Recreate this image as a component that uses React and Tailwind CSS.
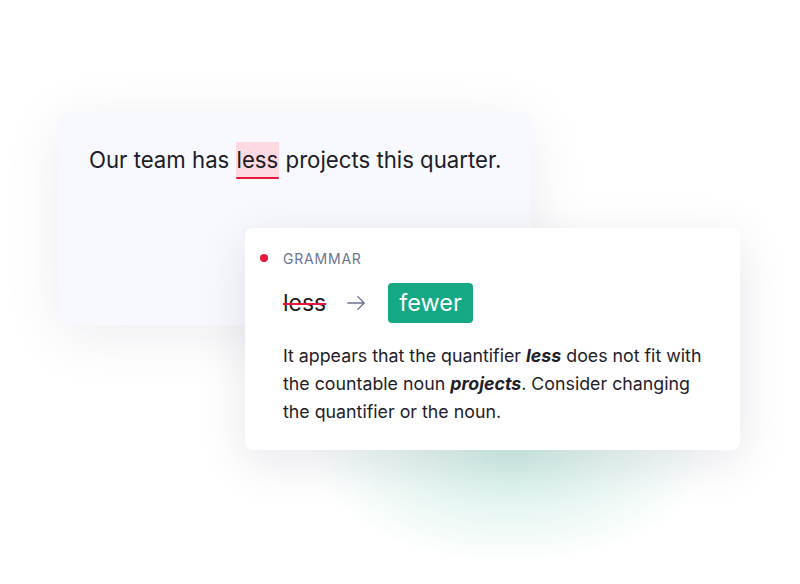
import React from 'react';

const App = () => {
     return (
          <div
               className="relative w-[800px] h-[584px] overflow-hidden bg-white"
               style={{ fontFamily: 'Inter, "Noto Sans", sans-serif' }}
          >
               {/* soft green glow under the suggestion card */}
               <div className="absolute left-[310px] top-[345px] w-[400px] h-[220px] rounded-full bg-[radial-gradient(ellipse_at_center,rgba(20,168,132,0.2),rgba(20,168,132,0)_70%)]" />

               <div className="relative flex flex-col items-start pt-[112px] pl-[59px]">
                    {/* original sentence card */}
                    <div className="w-[472px] h-[213px] rounded-lg bg-[#f8f9fe] shadow-[0_10px_60px_rgba(20,24,60,0.08)] pt-[30px] pl-[30px]">
                         <p className="whitespace-nowrap text-[22.2px] leading-[36px] text-[#1b1c26]">
                              Our team has{' '}
                              <span className="relative inline-block bg-[#fdd9e1] px-[1px]">
                                   less
                                   <span className="absolute left-0 right-0 -bottom-[1px] h-[2px] rounded-full bg-[#e5173f]" />
                              </span>{' '}
                              projects this quarter.
                         </p>
                    </div>

                    {/* suggestion card, laid over the sentence card */}
                    <div className="relative -mt-[97px] ml-[186px] w-[495px] h-[222px] rounded-lg bg-white shadow-[0_12px_50px_rgba(20,24,60,0.10)] pt-[20px] pl-[15px] pr-[30px]">
                         <div className="flex items-center gap-[15px] h-[20px]">
                              <span className="w-[8px] h-[8px] rounded-full bg-[#e5173f]" />
                              <span className="text-[14px] tracking-[0.8px] text-[#6b7391]">GRAMMAR</span>
                         </div>
                         <div className="flex items-center mt-[15px] h-[40px] pl-[23px]">
                              <span className="text-[23px] text-[#1b1c26] line-through decoration-[#e5173f] decoration-[1.5px]">less</span>
                              <svg className="ml-[19px]" width="22" height="22" viewBox="0 0 24 24" fill="none" stroke="#6b7391" strokeWidth="1.4" strokeLinecap="round" strokeLinejoin="round">
                                   <path d="M3 12h18M14 5l7 7-7 7" />
                              </svg>
                              <span className="ml-[21px] h-[40px] px-[11px] flex items-center rounded-[4px] bg-[#14a884] text-white text-[23.5px]">fewer</span>
                         </div>
                         <p className="mt-[19px] pl-[23px] text-[17.8px] leading-[28px] text-[#1f2029] w-[460px]">
                              It appears that the quantifier <b className="italic font-bold">less</b> does not fit with the countable noun{' '}
                              <b className="italic font-bold">projects</b>. Consider changing the quantifier or the noun.
                         </p>
                    </div>
               </div>
          </div>
     );
};

export default App;
